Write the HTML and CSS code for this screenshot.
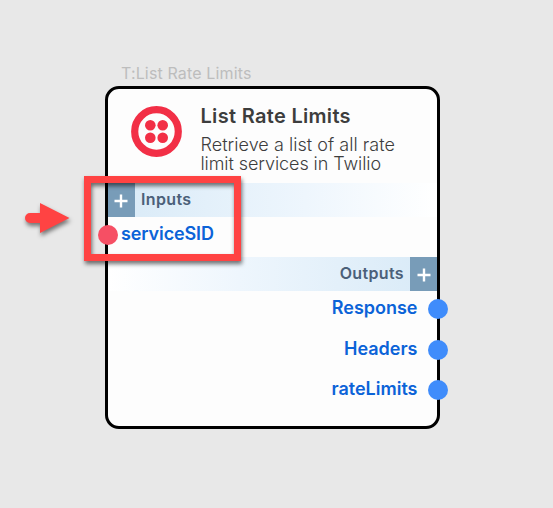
FILE: index.html
```html
<!DOCTYPE html>
<html lang="en">
<head>
<meta charset="utf-8">
<title>List Rate Limits</title>
<link rel="stylesheet" href="styles.css">
</head>
<body>
<main class="canvas">
  <section class="node">
    <div class="node-tag"><span>T:List Rate Limits</span></div>
    <div class="card">
      <header class="head">
        <svg class="logo" viewBox="0 0 51 51" aria-hidden="true">
          <circle cx="25.5" cy="25.5" r="21.8" fill="none" stroke="#f22f46" stroke-width="7.2"/>
          <g fill="#f22f46">
            <circle cx="19.3" cy="19.3" r="5.3"/><circle cx="31.7" cy="19.3" r="5.3"/>
            <circle cx="19.3" cy="31.7" r="5.3"/><circle cx="31.7" cy="31.7" r="5.3"/>
          </g>
        </svg>
        <div class="info">
          <h1 class="title"><span>List Rate Limits</span></h1>
          <p class="desc">Retrieve a list of all rate<br><span class="desc-end">limit services in Twilio</span></p>
        </div>
      </header>
      <div class="bar bar-in">
        <span class="add"><svg viewBox="0 0 14 14"><path d="M7 0.5v13M0.5 7h13"/></svg></span>
        <span class="bar-label">Inputs</span>
      </div>
      <div class="port port-in"><i class="dot"></i><span>serviceSID</span></div>
      <div class="bar bar-out">
        <span class="bar-label">Outputs</span>
        <span class="add"><svg viewBox="0 0 14 14"><path d="M7 0.5v13M0.5 7h13"/></svg></span>
      </div>
      <div class="outputs">
        <div class="port port-out"><span>Response</span><i class="dot"></i></div>
        <div class="port port-out"><span>Headers</span><i class="dot"></i></div>
        <div class="port port-out"><span>rateLimits</span><i class="dot"></i></div>
      </div>
    </div>
  </section>
  <div class="highlight"></div>
  <svg class="arrow" viewBox="0 0 60 50" aria-hidden="true">
    <path d="M10 18H20V8L49.500 23L20 38V28H10A5 5 0 0 1 10 18Z" fill="#ff4343"/>
  </svg>
</main>
</body>
</html>
```
FILE: styles.css
```css
* { box-sizing: border-box; }
body { margin: 0; font-family: Inter, sans-serif; font-optical-sizing: none; }
.canvas { position: relative; width: 553px; height: 508px; overflow: hidden; background: #e8e8e8; }
.node { position: absolute; left: 105px; top: 62px; width: 335px; }
.node-tag { height: 24px; padding-left: 16px; font-size: 16px; line-height: 23px; letter-spacing: .14px; color: #bdbdbd; white-space: nowrap; }
.card { height: 343px; border: 3px solid #000; border-radius: 14px; background: #fdfdfd; }
.head { display: flex; height: 94px; padding: 17px 0 0 23px; gap: 18.500px; }
.logo { flex: none; width: 51px; height: 51px; }
.info { white-space: nowrap; color: #3d3d3d; }
.title { margin: -2px 0 0; font-size: 20px; line-height: 24px; font-weight: 600; letter-spacing: .31px; }
.desc { margin: 7px 0 0; font-size: 18px; line-height: 19px; font-weight: 300; letter-spacing: .04px; }
.desc-end { letter-spacing: -.08px; }
.bar { display: flex; align-items: center; height: 34px; }
.bar-in { background: linear-gradient(90deg, #d8eaf7, #eef6fd 60%, #fff); }
.bar-out { justify-content: flex-end; background: linear-gradient(270deg, #d8eaf7, #eef6fd 60%, #fff); }
.add { display: flex; align-items: center; justify-content: center; width: 27px; height: 34px; background: #789cb8; }
.add svg { width: 14px; height: 14px; margin-top: 2px; fill: none; stroke: #fff; stroke-width: 2.4; }
.bar-in .add svg { margin-left: -2px; }
.bar-label { margin: -2px 6px 0; font-size: 16px; line-height: 20px; font-weight: 600; letter-spacing: .35px; color: #4b6079; }
.port { display: flex; align-items: center; gap: 3px; font-size: 18px; font-weight: 600; line-height: 22px; color: #0b63d8; }
.port span { position: relative; top: -1px; }
.dot { flex: none; width: 20px; height: 20px; border-radius: 50%; background: #3f8cfb; }
.port-in { height: 40px; margin-left: -10px; padding-bottom: 4px; letter-spacing: -.12px; }
.port-in .dot { background: #f64f64; }
.outputs { display: grid; grid-template-rows: repeat(3, 40.400px); margin: -2px -11px 0 0; }
.port-out { justify-content: flex-end; gap: 10.500px; }
.highlight { position: absolute; left: 84px; top: 176px; width: 157px; height: 85px; border: 7px solid #ff4343; filter: drop-shadow(1px 3px 2px rgba(0, 0, 0, .55)); }
.arrow { position: absolute; left: 20px; top: 195px; width: 60px; height: 50px; filter: drop-shadow(1px 3px 2px rgba(0, 0, 0, .5)); }
```
